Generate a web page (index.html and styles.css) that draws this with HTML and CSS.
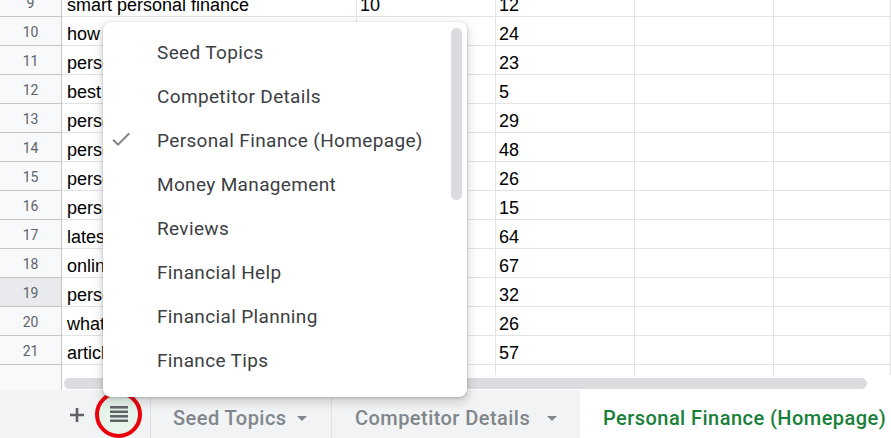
FILE: index.html
```html
<!DOCTYPE html>
<html>
<head>
<meta charset="utf-8">
<link rel="stylesheet" href="styles.css">
</head>
<body>
<div class="app">
  <div class="sheet">
    <div class="grid-wrap">
      <div class="grid">
        <div class="row"><div class="rh">9</div><div class="c a">smart personal finance</div><div class="c n">10</div><div class="c n">12</div><div class="c"></div><div class="c"></div></div>
        <div class="row"><div class="rh">10</div><div class="c a">how to manage personal finance</div><div class="c n">20</div><div class="c n">24</div><div class="c"></div><div class="c"></div></div>
        <div class="row"><div class="rh">11</div><div class="c a">personal finance tips</div><div class="c n">20</div><div class="c n">23</div><div class="c"></div><div class="c"></div></div>
        <div class="row"><div class="rh">12</div><div class="c a">best personal finance books</div><div class="c n">10</div><div class="c n">5</div><div class="c"></div><div class="c"></div></div>
        <div class="row"><div class="rh">13</div><div class="c a">personal finance software</div><div class="c n">30</div><div class="c n">29</div><div class="c"></div><div class="c"></div></div>
        <div class="row"><div class="rh">14</div><div class="c a">personal finance app</div><div class="c n">40</div><div class="c n">48</div><div class="c"></div><div class="c"></div></div>
        <div class="row"><div class="rh">15</div><div class="c a">personal finance blog</div><div class="c n">20</div><div class="c n">26</div><div class="c"></div><div class="c"></div></div>
        <div class="row"><div class="rh">16</div><div class="c a">personal finance courses</div><div class="c n">10</div><div class="c n">15</div><div class="c"></div><div class="c"></div></div>
        <div class="row"><div class="rh">17</div><div class="c a">latest personal finance news</div><div class="c n">50</div><div class="c n">64</div><div class="c"></div><div class="c"></div></div>
        <div class="row"><div class="rh">18</div><div class="c a">online personal finance tools</div><div class="c n">60</div><div class="c n">67</div><div class="c"></div><div class="c"></div></div>
        <div class="row"><div class="rh sel">19</div><div class="c a">personal finance basics</div><div class="c n">30</div><div class="c n">32</div><div class="c"></div><div class="c"></div></div>
        <div class="row"><div class="rh">20</div><div class="c a">what is personal finance</div><div class="c n">20</div><div class="c n">26</div><div class="c"></div><div class="c"></div></div>
        <div class="row"><div class="rh">21</div><div class="c a">articles on personal finance</div><div class="c n">50</div><div class="c n">57</div><div class="c"></div><div class="c"></div></div>
        <div class="row"><div class="rh"></div><div class="c a"></div><div class="c n"></div><div class="c n"></div><div class="c"></div><div class="c"></div></div>
      </div>
    </div>
    <div class="hscroll"><div class="hs-corner"></div><div class="hs-thumb"></div></div>
  </div>

  <div class="tabbar">
    <div class="tb-btn add">
      <svg width="16" height="16" viewBox="0 0 16 16"><path d="M1 8h14M8 1v14" stroke="#5f6368" stroke-width="2.6" fill="none"/></svg>
    </div>
    <div class="tb-btn list">
      <svg width="18" height="16" viewBox="0 0 18 16"><rect x="0" y="0" width="18" height="2.6" fill="#5f6368"/><rect x="0" y="4.5" width="18" height="2.6" fill="#5f6368"/><rect x="0" y="9" width="18" height="2.6" fill="#5f6368"/><rect x="0" y="13.5" width="18" height="2.6" fill="#5f6368"/></svg>
    </div>
    <div class="tab t1"><span>Seed Topics</span><span class="arrow"></span></div>
    <div class="tab t2"><span>Competitor Details</span><span class="arrow"></span></div>
    <div class="tab active"><span>Personal Finance (Homepage)</span></div>
  </div>

  <div class="menu">
    <div class="mi">Seed Topics</div>
    <div class="mi">Competitor Details</div>
    <div class="mi checked"><svg class="check" width="24" height="24" viewBox="0 0 24 24"><path d="M9 16.17L4.83 12l-1.42 1.41L9 19 21 7l-1.41-1.41z" fill="#80868b"/></svg>Personal Finance (Homepage)</div>
    <div class="mi">Money Management</div>
    <div class="mi">Reviews</div>
    <div class="mi">Financial Help</div>
    <div class="mi">Financial Planning</div>
    <div class="mi">Finance Tips</div>
    <div class="menu-thumb"></div>
  </div>
</div>
</body>
</html>
```

FILE: styles.css
```css
* { box-sizing: border-box; }
html, body { margin: 0; padding: 0; }
body { width: 891px; height: 438px; overflow: hidden; background: #fff; font-family: "Liberation Sans", Arial, sans-serif; }
.app { position: relative; width: 891px; height: 438px; display: flex; flex-direction: column; }

.sheet { height: 390px; display: flex; flex-direction: column; }
.grid-wrap { height: 375px; overflow: hidden; }
.grid { margin-top: -12px; }
.row { display: grid; grid-template-columns: 62px 295px 139px 139px 139px 1fr; height: 29px; }
.rh {
  background: #f8f9fa; border-right: 1px solid #c4c7c5; border-bottom: 1px solid #c4c7c5;
  display: flex; align-items: center; justify-content: center; padding-top: 2px;
  font-family: Roboto, "Liberation Sans", sans-serif; font-size: 14px; color: #5f6368;
}
.rh.sel { background: #e8eaed; }
.c {
  border-right: 1px solid #e2e3e3; border-bottom: 1px solid #e2e3e3;
  display: flex; align-items: flex-end; padding-bottom: 0;
  font-size: 18px; line-height: 21px; color: #000; white-space: nowrap; overflow: hidden;
}
.c.a { padding-left: 5px; }
.c.n { padding-left: 3px; }

.hscroll { height: 15px; display: flex; }
.hs-corner { width: 62px; background: #f8f9fa; border-right: 1px solid #c4c7c5; }
.hs-thumb { flex: 1; margin: 3px 24px 1px 2px; background: #dadce0; border-radius: 6px; }

.tabbar { height: 48px; background: #f1f3f4; display: flex; align-items: center; font-family: Roboto, "Liberation Sans", sans-serif; }
.tb-btn { display: flex; align-items: center; justify-content: center; }
.add { width: 32px; height: 32px; margin-left: 61px; margin-top: 2px; }
.list { width: 47px; height: 47px; margin-left: 2px; border-radius: 50%; border: 4px solid #e8000b; background: #e6f4ea; }
.tab { height: 48px; display: flex; align-items: center; padding-top: 7px; font-size: 20px; font-weight: 500; letter-spacing: 0.45px; color: #80868b; white-space: nowrap; }
.t1 { margin-left: 8px; width: 181px; padding-left: 22px; padding-right: 24px; justify-content: space-between; border-left: 1px solid #dfe1e5; }
.t2 { width: 249px; padding-left: 23px; padding-right: 23px; justify-content: space-between; border-left: 1px solid #dfe1e5; }
.arrow { width: 0; height: 0; border-left: 5px solid transparent; border-right: 5px solid transparent; border-top: 5px solid #80868b; margin-top: 2px; }
.active { flex: 1; background: #fff; color: #188038; padding-left: 23px; }

.menu {
  position: absolute; left: 103px; top: 22px; width: 364px; height: 375px;
  background: #fff; border-radius: 8px; padding-top: 8px;
  box-shadow: 0 1px 3px rgba(60,64,67,.3), 0 4px 8px 3px rgba(60,64,67,.15);
  font-family: Roboto, "Liberation Sans", sans-serif;
}
.mi { height: 44px; display: flex; align-items: center; padding-left: 54px; font-size: 19px; color: #3c4043; position: relative; letter-spacing: 0.35px; }
.check { position: absolute; left: 6px; top: 9px; }
.menu-thumb { position: absolute; left: 348px; top: 6px; width: 11px; height: 172px; background: #dadce0; border-radius: 6px; }
```
